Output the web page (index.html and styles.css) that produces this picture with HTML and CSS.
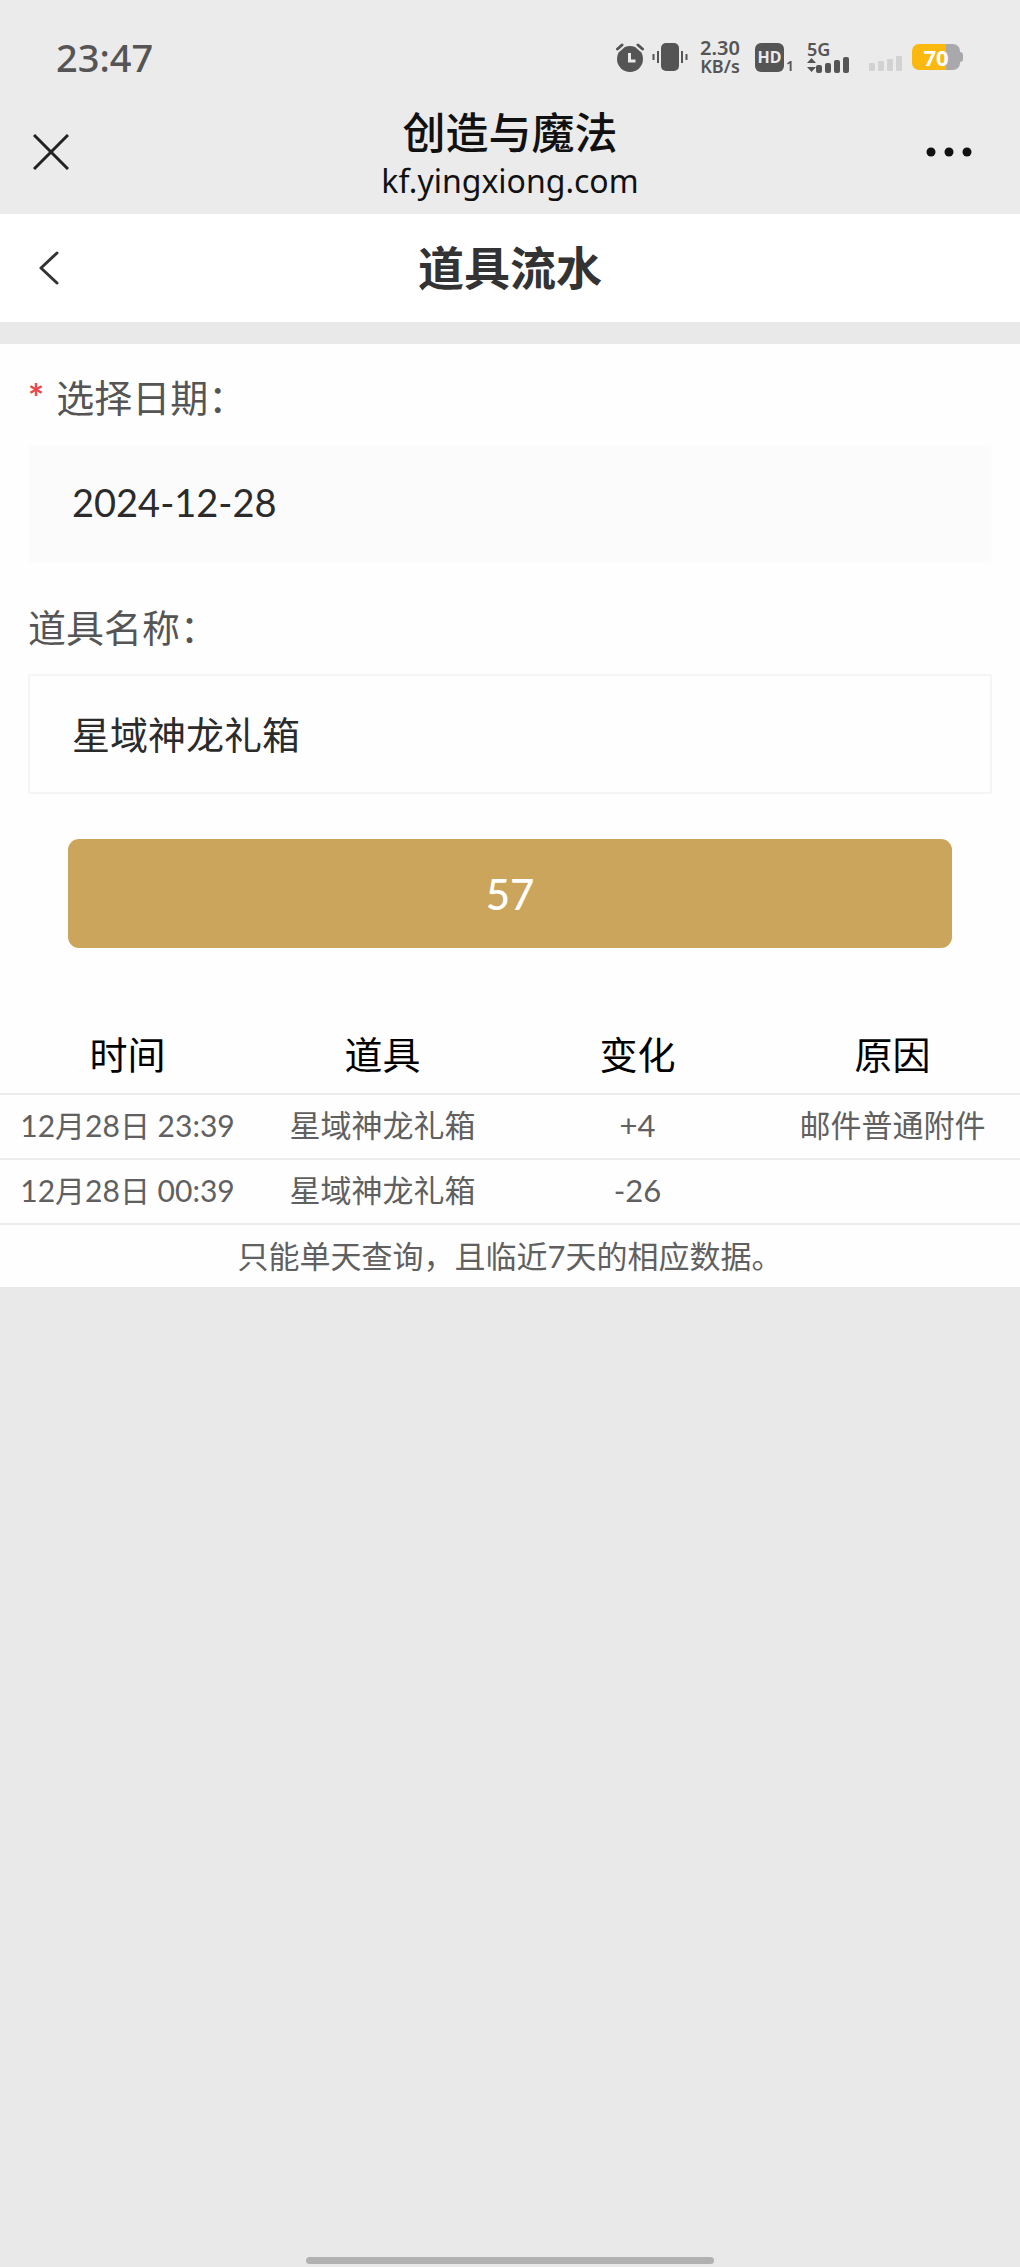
FILE: index.html
```html
<!DOCTYPE html>
<html lang="zh-CN">
<head>
    <meta charset="UTF-8">
    <meta name="viewport" content="width=device-width, initial-scale=1.0, viewport-fit=cover">
    <title>道具流水</title>
    <link rel="stylesheet" href="styles.css">
</head>
<body>
    <div class="status-bar">
        <span class="clock">23:47</span>
        <div class="status-icons">
            <svg class="icon-alarm" width="28" height="30" viewBox="0 0 28 30">
                <circle cx="14" cy="17" r="13" fill="#555"/>
                <path d="M1.500 7.500L6 3.500M26.500 7.500L22 3.500" stroke="#ebebeb" stroke-width="6"/>
                <path d="M1.500 7L6 3M26.500 7L22 3" stroke="#555" stroke-width="3" stroke-linecap="round"/>
                <path d="M13.500 11v8h6" fill="none" stroke="#ebebeb" stroke-width="3"/>
            </svg>
            <svg class="icon-vibrate" width="36" height="30" viewBox="0 0 36 30">
                <rect x="9" y="1" width="18" height="28" rx="5" fill="#555"/>
                <path d="M6 9v12M30 9v12M1.500 12v6M34.500 12v6" stroke="#555" stroke-width="2"/>
            </svg>
            <div class="speed"><span>2.30</span><span>KB/s</span></div>
            <span class="hd">HD</span>
            <span class="sim">1</span>
            <div class="signal">
                <span class="network">5G</span>
                <svg width="44" height="16" viewBox="0 0 44 16" fill="#555">
                    <path d="M0 6L4.500 1L9 6zM0 10L4.500 15L9 10z"/>
                    <rect x="9" y="8" width="6" height="8" rx="2"/>
                    <rect x="18" y="6" width="6" height="10" rx="2"/>
                    <rect x="27" y="3" width="6" height="13" rx="2"/>
                    <rect x="36" y="0" width="6" height="16" rx="2"/>
                </svg>
            </div>
            <svg class="icon-nosignal" width="34" height="30" viewBox="0 0 34 30" fill="#d2d2d2">
                <rect x="0" y="21" width="6" height="8" rx="1"/>
                <rect x="9" y="19" width="6" height="10" rx="1"/>
                <rect x="18" y="17" width="6" height="12" rx="1"/>
                <rect x="27" y="14" width="6" height="15" rx="1"/>
            </svg>
            <div class="battery">70</div>
        </div>
    </div>

    <header class="nav-bar">
        <button class="nav-btn" type="button" aria-label="关闭">
            <svg width="36" height="36" viewBox="0 0 36 36">
                <path d="M1 1L35 35M35 1L1 35" stroke="#222" stroke-width="3"/>
            </svg>
        </button>
        <div class="nav-title">
            <div class="site-name">创造与魔法</div>
            <div class="site-url">kf.yingxiong.com</div>
        </div>
        <button class="nav-btn nav-more" type="button" aria-label="更多">
            <svg width="46" height="10" viewBox="0 0 46 10" fill="#111">
                <circle cx="5" cy="5" r="4.500"/>
                <circle cx="23" cy="5" r="4.500"/>
                <circle cx="41" cy="5" r="4.500"/>
            </svg>
        </button>
    </header>

    <div class="page-header">
        <a href="#" class="back-btn" aria-label="返回">
            <svg width="20" height="34" viewBox="0 0 20 34">
                <path d="M18 2L2 17L18 32" fill="none" stroke="#333" stroke-width="3" stroke-linecap="round" stroke-linejoin="round"/>
            </svg>
        </a>
        <h1>道具流水</h1>
    </div>

    <main class="content">
        <form class="query-form">
            <label for="date"><span class="required">*</span>选择日期：</label>
            <input class="field field-date" id="date" type="text" value="2024-12-28" readonly>
            <label for="item">道具名称：</label>
            <input class="field" id="item" type="text" value="星域神龙礼箱">
            <button class="submit-btn" type="button">57</button>
        </form>

        <table class="records">
            <thead>
                <tr><th>时间</th><th>道具</th><th>变化</th><th>原因</th></tr>
            </thead>
            <tbody>
                <tr><td class="time">12月28日 23:39</td><td>星域神龙礼箱</td><td>+4</td><td>邮件普通附件</td></tr>
                <tr><td class="time">12月28日 00:39</td><td>星域神龙礼箱</td><td>-26</td><td></td></tr>
            </tbody>
        </table>
        <p class="note">只能单天查询，且临近7天的相应数据。</p>
    </main>

    <div class="home-indicator"></div>
</body>
</html>
```

FILE: styles.css
```css
* {
    box-sizing: border-box;
}

html, body {
    margin: 0;
    padding: 0;
}

body {
    min-height: 100vh;
    display: flex;
    flex-direction: column;
    background: #e9e9e9;
    color: #333;
    font-family: Lato, 'Noto Sans CJK SC', sans-serif;
}

button, input {
    font-family: inherit;
}

svg {
    display: block;
}

/* Status bar */
.status-bar {
    display: flex;
    align-items: center;
    justify-content: space-between;
    height: 90px;
    padding: 24px 57px 0 56px;
    background: #ebebeb;
    color: #555;
    font-family: 'Noto Sans', sans-serif;
    font-weight: 600;
}

.clock {
    font-size: 38px;
    font-weight: 500;
    line-height: 48px;
}

.status-icons {
    display: flex;
    align-items: center;
}

.icon-vibrate {
    margin-left: 8px;
}

.speed {
    display: flex;
    flex-direction: column;
    width: 46px;
    margin-left: 9px;
    font-size: 20px;
    line-height: 19px;
    text-align: center;
}

.speed span:last-child {
    font-size: 18px;
}

.hd {
    width: 29px;
    margin-left: 12px;
    border-radius: 6px;
    background: #555;
    color: #ebebeb;
    font-size: 16px;
    font-weight: 700;
    line-height: 29px;
    text-align: center;
}

.sim {
    align-self: flex-end;
    margin-left: 2px;
    font-size: 14px;
    line-height: 20px;
}

.signal {
    margin-left: 13px;
}

.network {
    display: block;
    font-size: 18px;
    line-height: 16px;
}

.icon-nosignal {
    margin-left: 18px;
}

.battery {
    position: relative;
    width: 48px;
    margin: 0 3px 0 9px;
    border-radius: 7px;
    background: linear-gradient(to right, #fbb80f 70%, #a9a9ad 70%);
    color: #fff;
    font-size: 22px;
    font-weight: 700;
    line-height: 26px;
    text-align: center;
}

.battery::after {
    content: '';
    position: absolute;
    top: 8px;
    right: -3px;
    width: 3px;
    height: 10px;
    border-radius: 0 3px 3px 0;
    background: #a9a9ad;
}

/* Browser bar */
.nav-bar {
    display: flex;
    align-items: center;
    justify-content: space-between;
    height: 124px;
    padding: 0 48px 0 33px;
    background: #ebebeb;
    color: #111;
}

.nav-btn {
    display: flex;
    width: 61px;
    padding: 0;
    border: none;
    background: none;
    cursor: pointer;
}

.nav-more {
    width: 46px;
}

.nav-title {
    padding-top: 4px;
    text-align: center;
}

.site-name {
    font-size: 43px;
    font-weight: 500;
    line-height: 54px;
}

.site-url {
    font-family: 'Noto Sans', sans-serif;
    font-size: 32px;
    line-height: 42px;
}

/* Page header */
.page-header {
    display: flex;
    align-items: center;
    height: 130px;
    padding: 0 39px;
    border-bottom: 22px solid #e9e9e9;
    background: #fff;
}

.page-header h1 {
    flex: 1;
    margin: 0 20px 0 0;
    font-size: 46px;
    font-weight: 700;
    line-height: 60px;
    text-align: center;
}

/* Query form */
.content {
    background: #fefefe;
}

.query-form {
    display: flex;
    flex-direction: column;
    padding: 26px 28px 0;
}

.query-form label {
    margin-bottom: 20px;
    color: #555;
    font-size: 38px;
    line-height: 54px;
}

.required {
    margin-right: 12px;
    color: #e8474c;
    font-weight: 700;
}

.field {
    width: 100%;
    height: 120px;
    margin-bottom: 36px;
    padding: 0 42px 4px;
    border: 2px solid #f5f5f5;
    border-radius: 2px;
    outline: none;
    background: #fefefe;
    color: #2b2b2b;
    font-size: 38px;
}

.field-date {
    border-color: #fdfdfd;
    background: #fbfbfb;
}

.submit-btn {
    height: 109px;
    margin: 9px 40px 0;
    border: none;
    border-radius: 11px;
    background: #cba55b;
    color: #fff;
    font-size: 42px;
    font-weight: 500;
    cursor: pointer;
}

/* Records */
.records {
    width: 100%;
    margin-top: 71px;
    border-collapse: collapse;
    table-layout: fixed;
    text-align: center;
}

.records th {
    height: 75px;
    padding: 0 0 4px;
    border-bottom: 2px solid #ececec;
    color: #000;
    font-size: 38px;
    font-weight: 400;
    line-height: 54px;
}

.records td {
    height: 65px;
    padding: 0 0 4px;
    border-bottom: 2px solid #ececec;
    color: #606060;
    font-size: 31px;
    line-height: 46px;
    white-space: nowrap;
}

.records .time {
    font-size: 30px;
}

.note {
    margin: 0;
    color: #606060;
    font-size: 31px;
    line-height: 62px;
    text-align: center;
}

.home-indicator {
    width: 40%;
    height: 7px;
    margin: auto auto 3px;
    border-radius: 4px;
    background: #b1b1b1;
}
```
